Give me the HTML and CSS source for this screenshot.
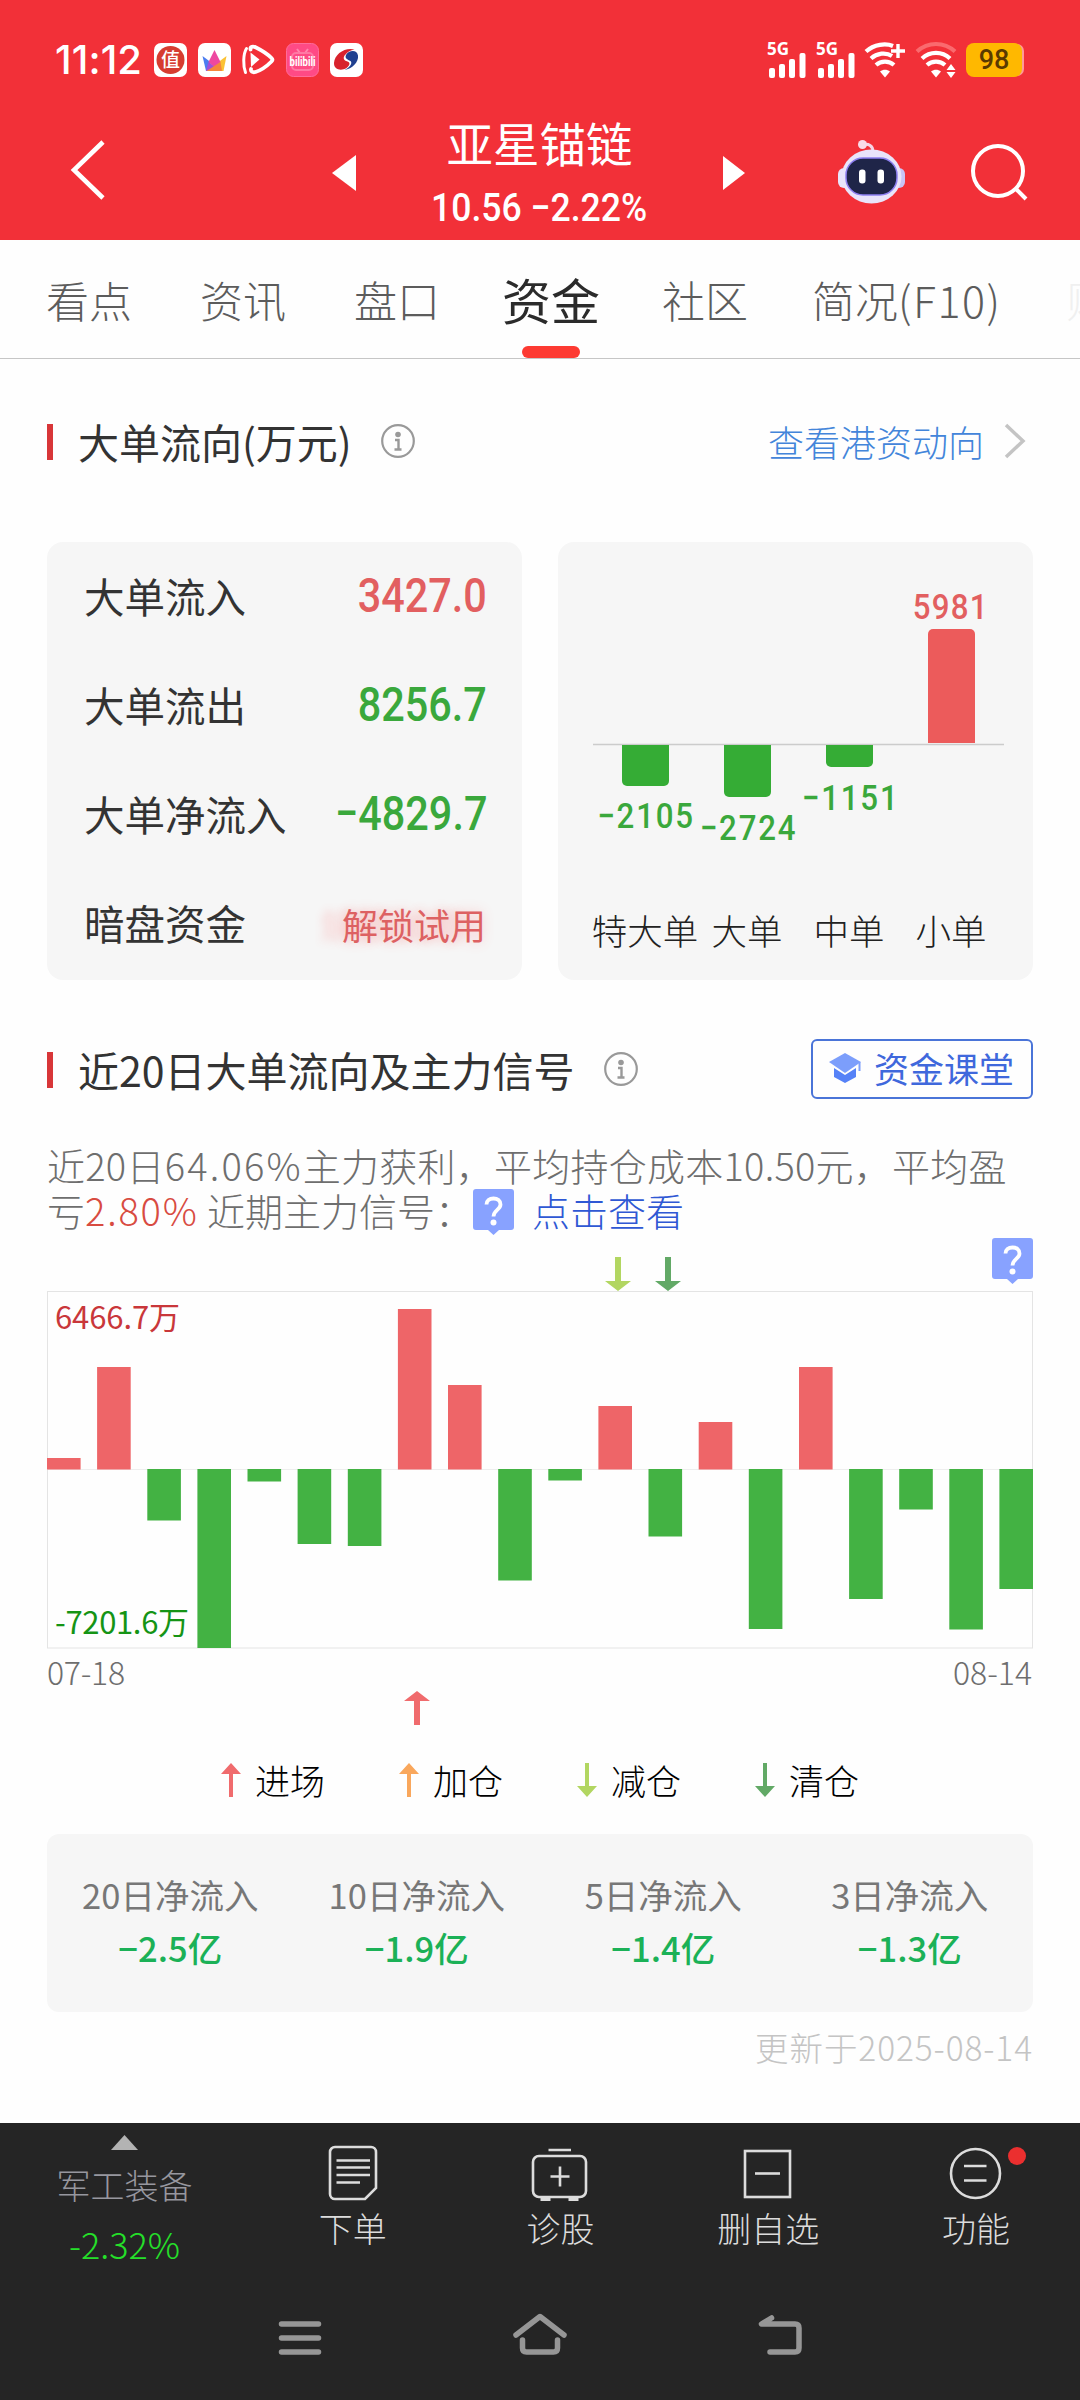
FILE: index.html
```html
<!DOCTYPE html>
<html lang="zh-CN">
<head>
  <meta charset="UTF-8" />
  <meta name="viewport" content="width=device-width, initial-scale=1.0" />
  <title>亚星锚链 - 资金</title>
  <link rel="stylesheet" href="styles.css">
</head>
<body>

  <svg width="0" height="0" class="defs">
    <symbol id="arrow-up" viewBox="0 0 26 34"><path d="M13 0 26 10H16V34H10V10H0z"/></symbol>
    <symbol id="arrow-down" viewBox="0 0 26 34"><path d="M13 34 0 24H10V0H16V24H26z"/></symbol>
    <symbol id="arrow-up-s" viewBox="0 0 20 34"><path d="M10 0 20 11H12V34H8V11H0z"/></symbol>
    <symbol id="arrow-down-s" viewBox="0 0 20 34"><path d="M10 34 0 23H8V0H12V23H20z"/></symbol>
    <symbol id="info" viewBox="0 0 34 34">
      <circle cx="17" cy="17" r="15.8" fill="none" stroke="#999" stroke-width="2.2"/>
      <circle cx="17" cy="10.5" r="2.8" fill="#999"/>
      <path d="M14 16h3.5v9M13.5 25.5h7" fill="none" stroke="#999" stroke-width="2.4"/>
    </symbol>
    <symbol id="help" viewBox="0 0 41 46">
      <path d="M3 0H38a3 3 0 0 1 3 3V38a3 3 0 0 1-3 3H26L20.500 46 15 41H3a3 3 0 0 1-3-3V3a3 3 0 0 1 3-3z" fill="#88a2ff"/>
      <path d="M13.500 15.500c0-4 3-6 7-6s7 2.200 7 6c0 5.300-7 5.600-7 12" fill="none" stroke="#fff" stroke-width="3.800"/>
      <circle cx="20.500" cy="33.500" r="3" fill="#fff"/>
    </symbol>
    <symbol id="signal" viewBox="0 0 39 36">
      <rect x="2" y="26" width="6" height="10" rx="2"/>
      <rect x="12" y="22" width="6" height="14" rx="2"/>
      <rect x="22" y="17" width="6" height="19" rx="2"/>
      <rect x="32.500" y="11" width="6" height="25" rx="2"/>
    </symbol>
  </svg>

  <header>
    <div class="status">
      <span class="time">11:12</span>
      <div class="apps">
        <svg viewBox="0 0 33 34"><rect width="33" height="34" rx="7" fill="#fff"/><circle cx="16.500" cy="17" r="14" fill="#d63c30"/><text x="16.500" y="24" font-size="19" font-weight="500" text-anchor="middle" fill="#fff">值</text></svg>
        <svg viewBox="0 0 33 34"><rect width="33" height="34" rx="7" fill="#fff"/><path d="M4.500 13l8 6-1 9H8z" fill="#4b7df0"/><path d="M28.500 13l-8 6 1 9h4z" fill="#fbc233"/><path d="M16.500 7l6 12-6 6-6-6z" fill="#ee48a0"/><path d="M10.500 19l6 5-4 4H8z" fill="#a050d8"/><path d="M22.500 19l-14 9H24z" fill="#f6863c"/></svg>
        <svg viewBox="0 0 33 34"><path d="M4.500 5.500C1 11 1 23 3.500 29.500" fill="none" stroke="#fff" stroke-width="3" stroke-linecap="round"/><path d="M8.500 6.500C8 3.500 11 3 14 4.500 20 7.500 26 11.500 29.500 15c1 1 1 2.500 0 3.500C25 23 20 27 13.500 29c-3 .8-5-.5-4.500-3" fill="none" stroke="#fff" stroke-width="3.800" stroke-linecap="round"/><path d="M8.500 9.500 17.500 16.500 9 24z" fill="#fff"/></svg>
        <svg viewBox="0 0 33 34"><rect x=".5" y=".5" width="32" height="33" rx="7" fill="#ff4a85" stroke="#ff6b9a"/><path d="M11 6l3 4M22 6l-3 4" stroke="#ff86ad" stroke-width="2"/><rect x="6" y="10" width="21" height="17" rx="4" fill="none" stroke="#ff78a4" stroke-width="2"/><text class="bili" x="16.500" y="23" font-size="13" font-weight="700" text-anchor="middle" textLength="26" lengthAdjust="spacingAndGlyphs" fill="#fff">bilibili</text></svg>
        <svg viewBox="0 0 33 34"><rect width="33" height="34" rx="7" fill="#fff"/><path d="M24.500 6.500C15 4 4.500 11 4 20c-.3 6.500 7 8.500 12.500 5 3.500-2.500 4-5.500 1-6.500-4-1-5-4-2-7 2-2.500 5-4.500 9-5z" fill="#d8222c"/><path d="M16 12c2.500-5 11-6 12 .5 1 6.500-6 13.500-13.500 14.500 5-2 8.500-7 6-9-3-1.500-6-2.500-4.500-6z" fill="#20408f"/></svg>
      </div>
      <div class="sysicons">
        <svg class="sig" viewBox="0 0 39 36" fill="#fff"><text class="fiveg" x="0" y="12.500">5G</text><use href="#signal"/></svg>
        <svg class="sig" viewBox="0 0 39 36" fill="#fff"><text class="fiveg" x="0" y="12.500">5G</text><use href="#signal"/></svg>
        <svg class="wifi" viewBox="0 0 40 36"><g fill="none" stroke="#fff" stroke-width="4.200"><path d="M1 9.500C9 2 21 1 28 4"/><path d="M6 16.500C12 11 21 10 27 14"/><path d="M11 23c5-4.500 13-4.500 18 0"/><path d="M33 2v14M26 9h14" stroke-width="3.400"/></g><path d="M15 29.500c3-2.500 7-2.500 10 0L20 35.500z" fill="#fff"/></svg>
        <svg class="wifi" viewBox="0 0 40 36"><g fill="none" stroke="#fff" stroke-width="4.200"><path d="M1 9.500C12-.5 28-.5 39 9.500" stroke="#fa6a6e"/><path d="M6 16.500c8-7.500 20-7.500 28 0"/><path d="M11 23c5-4.500 13-4.500 18 0"/></g><path d="M15 29.500c3-2.500 7-2.500 10 0L20 35.500z" fill="#fff"/><path d="M35 22l4.500 6h-9zM35 36l4.500-6h-9z" fill="#fff"/></svg>
        <div class="battery">98</div>
      </div>
    </div>

    <div class="titlebar">
      <svg class="back" viewBox="0 0 34 60"><path d="M32 2 3 30 32 58" fill="none" stroke="#fff" stroke-width="4.600"/></svg>
      <svg class="prev" viewBox="0 0 24 36"><path d="M24 0V36L0 18z" fill="#fff"/></svg>
      <div class="stock">
        <h1>亚星锚链</h1>
        <p class="din"><span>10.56 −2.22%</span></p>
      </div>
      <svg class="next" viewBox="0 0 22 34"><path d="M0 0V34L22 17z" fill="#fff"/></svg>
      <svg class="robot" viewBox="0 0 67 64">
        <path d="M24 5c7-2 11 1 11 7" fill="none" stroke="#f6d5e6" stroke-width="3"/>
        <circle cx="24.500" cy="4.500" r="4.500" fill="#f9dbe8"/>
        <rect x="0" y="28" width="12" height="20" rx="6" fill="#e8e4fb"/>
        <rect x="55" y="28" width="12" height="20" rx="6" fill="#c9c4f6"/>
        <ellipse cx="33.500" cy="36.500" rx="30" ry="27" fill="#e9e4fa"/>
        <rect x="8" y="18" width="51" height="37" rx="17" fill="#1f2548" stroke="#8d7ff0" stroke-width="1.500"/>
        <rect x="21" y="29.500" width="6.500" height="14" rx="3" fill="#fff"/>
        <rect x="39.500" y="29.500" width="6.500" height="14" rx="3" fill="#fff"/>
      </svg>
      <svg class="search" viewBox="0 0 57 56"><circle cx="27" cy="27" r="25" fill="none" stroke="#fff" stroke-width="4"/><path d="M45 45l10 10" stroke="#fff" stroke-width="4"/></svg>
    </div>
  </header>

  <nav class="tabs">
    <a>看点</a>
    <a>资讯</a>
    <a>盘口</a>
    <a class="active">资金</a>
    <a>社区</a>
    <a class="profile">简况<span class="latin">(F10)</span></a>
    <a class="faded">财务</a>
  </nav>

  <section class="flow">
    <div class="heading">
      <h2>大单流向(万元)</h2>
      <svg class="info"><use href="#info"/></svg>
      <a class="more">查看港资动向 <svg viewBox="0 0 22 36"><path d="M2 2 19 18 2 34" fill="none" stroke="#c4c4c4" stroke-width="3.500"/></svg></a>
    </div>

    <div class="cards">
      <div class="card figures">
        <div class="row"><span>大单流入</span><b class="din red"><span>3427.0</span></b></div>
        <div class="row"><span>大单流出</span><b class="din green"><span>8256.7</span></b></div>
        <div class="row"><span>大单净流入</span><b class="din green"><span>−4829.7</span></b></div>
        <div class="row"><span>暗盘资金</span><span class="unlock">解锁试用</span></div>
      </div>
      <div class="card">
        <svg class="orders" viewBox="0 0 475 438">
          <path d="M35 202.500H446" stroke="#ccc" stroke-width="1.500"/>
          <g fill="#35ac35">
            <path d="M64 203H111V239a5 5 0 0 1-5 5H69a5 5 0 0 1-5-5z"/>
            <path d="M166 203H213V250a5 5 0 0 1-5 5H171a5 5 0 0 1-5-5z"/>
            <path d="M268 203H315V220a5 5 0 0 1-5 5H273a5 5 0 0 1-5-5z"/>
          </g>
          <path d="M370 201V92a5 5 0 0 1 5-5H412a5 5 0 0 1 5 5V201z" fill="#ec5b5b"/>
          <!-- digits squeezed to 88%, x is in squeezed units -->
          <g class="vals green" transform="scale(.88 1)">
            <text x="44.500" y="286" textLength="109">−2105</text>
            <text x="161" y="298" textLength="109">−2724</text>
            <text x="277" y="268" textLength="109">−1151</text>
            <text class="red" x="403" y="77" textLength="85">5981</text>
          </g>
          <g class="cats">
            <text x="87">特大单</text>
            <text x="189">大单</text>
            <text x="291">中单</text>
            <text x="393">小单</text>
          </g>
        </svg>
      </div>
    </div>
  </section>

  <section class="signal">
    <div class="heading">
      <h2>近20日大单流向及主力信号</h2>
      <svg class="info"><use href="#info"/></svg>
      <a class="course">
        <svg viewBox="0 0 32 30"><path d="M16 0 32 9 16 20 0 9z" fill="#7c9efb"/><path d="M5 15l11 7 11-7v9l-11 6-11-6z" fill="#5682f7"/><path d="M30.500 9v9" stroke="#7c9efb" stroke-width="2"/></svg>
        资金课堂
      </a>
    </div>

    <div class="summary">
      <p>近20日<span class="wide">64.06%</span>主力获利，平均持仓成本10.50元，平均盈</p>
      <p>亏<em class="wide">2.80%</em> 近期主力信号：<svg class="help"><use href="#help"/></svg><a>点击查看</a></p>
    </div>

    <!-- 近20日大单净流入 -->
    <svg class="chart" viewBox="0 0 986 490">
      <use href="#arrow-down" x="558" y="19" width="26" height="34" fill="#b2d661"/>
      <use href="#arrow-down" x="608" y="19" width="26" height="34" fill="#62a966"/>
      <use href="#help" x="945" y="0" width="41" height="46"/>
      <rect x=".5" y="53.500" width="985" height="356.500" fill="none" stroke="#e4e4e4"/>
      <path d="M0 231.500H986" stroke="#eee"/>
      <g fill="#ee6568">
        <rect x="0" y="220" width="33.600" height="11.500"/>
        <rect x="50.100" y="129" width="33.600" height="102.500"/>
        <rect x="350.900" y="71" width="33.600" height="160.500"/>
        <rect x="401" y="147" width="33.600" height="84.500"/>
        <rect x="551.400" y="168" width="33.600" height="63.500"/>
        <rect x="651.700" y="184" width="33.600" height="47.500"/>
        <rect x="752" y="129" width="33.600" height="102.500"/>
      </g>
      <g fill="#43b243">
        <rect x="100.300" y="231" width="33.600" height="51.500"/>
        <rect x="150.400" y="231" width="33.600" height="179"/>
        <rect x="200.500" y="231" width="33.600" height="12.500"/>
        <rect x="250.600" y="231" width="33.600" height="75"/>
        <rect x="300.800" y="231" width="33.600" height="77"/>
        <rect x="451.200" y="231" width="33.600" height="111.500"/>
        <rect x="501.300" y="231" width="33.600" height="11.500"/>
        <rect x="601.500" y="231" width="33.600" height="67.500"/>
        <rect x="701.800" y="231" width="33.600" height="160"/>
        <rect x="802.100" y="231" width="33.600" height="130"/>
        <rect x="852.200" y="231" width="33.600" height="40.500"/>
        <rect x="902.300" y="231" width="33.600" height="160.500"/>
        <rect x="952.400" y="231" width="33.600" height="120"/>
      </g>
      <g class="scale">
        <text x="8" y="91" textLength="125" fill="#c9373a">6466.7万</text>
        <text x="8" y="396" textLength="134" fill="#159415">-7201.6万</text>
        <text class="date" x="0" y="447" textLength="78">07-18</text>
        <text class="date" x="906" y="447" textLength="79">08-14</text>
      </g>
      <use href="#arrow-up" x="357" y="453" width="26" height="34" fill="#f06b6d"/>
    </svg>

    <div class="legend">
      <span><svg fill="#f06b6d"><use href="#arrow-up-s"/></svg>进场</span>
      <span><svg fill="#f9a75c"><use href="#arrow-up-s"/></svg>加仓</span>
      <span><svg fill="#b2d661"><use href="#arrow-down-s"/></svg>减仓</span>
      <span><svg fill="#62a966"><use href="#arrow-down-s"/></svg>清仓</span>
    </div>

    <div class="card totals">
      <div><span>20日净流入</span><b>−2.5亿</b></div>
      <div><span>10日净流入</span><b>−1.9亿</b></div>
      <div><span>5日净流入</span><b>−1.4亿</b></div>
      <div><span>3日净流入</span><b>−1.3亿</b></div>
    </div>
    <p class="updated">更新于2025-08-14</p>
  </section>

  <footer>
    <div class="toolbar">
      <div class="sector">
        <svg viewBox="0 0 27 15"><path d="M13.500 0 27 15H0z" fill="#b3b3b3"/></svg>
        <span>军工装备</span>
        <em>-2.32%</em>
      </div>
      <div class="tool">
        <svg viewBox="0 0 56 56"><path d="M10 2H46a5 5 0 0 1 5 5V43L40 54H10a5 5 0 0 1-5-5V7a5 5 0 0 1 5-5z"/><path d="M11.500 15.500H45M11.500 22.500H45M11.500 30H45M11.500 37.500H35"/></svg>
        <span>下单</span>
      </div>
      <div class="tool">
        <svg viewBox="0 0 56 56"><rect x="0" y="11" width="53" height="41" rx="6"/><path d="M15.500 5H38M17.500 31.500H36.500M27 21.500V41.500"/><path d="M7.500 54H17.500M35.500 54H45.500" stroke-width="4"/></svg>
        <span>诊股</span>
      </div>
      <div class="tool">
        <svg viewBox="0 0 56 56"><rect x="5" y="6" width="45" height="46"/><path d="M15 28.500H40"/></svg>
        <span>删自选</span>
      </div>
      <div class="tool">
        <svg viewBox="0 0 56 56"><circle cx="27.500" cy="28.500" r="24.500"/><path d="M16 21H38.500M16 35.500H38.500"/></svg>
        <span>功能</span>
        <i class="dot"></i>
      </div>
    </div>
    <div class="sysnav">
      <svg viewBox="0 0 54 42"><path d="M8.500 10H45.500M8.500 24H45.500M8.500 38H45.500"/></svg>
      <svg viewBox="0 0 54 42"><path d="M3 21 27 2.500 51 21M9.500 26v8q0 4 4 4h27q4 0 4-4v-8"/></svg>
      <svg viewBox="0 0 54 42"><path d="M18.500 4 8.500 10H42q4 0 4 4V34q0 4-4 4H17"/></svg>
    </div>
  </footer>

</body>
</html>
```
FILE: styles.css
```css
* { margin: 0; padding: 0; box-sizing: border-box; }
body { width: 1080px; height: 2400px; display: flex; flex-direction: column; background: #fefefe; color: #333; font-family: "Noto Sans CJK SC", sans-serif; font-weight: 300; overflow: hidden; }
svg { display: block; flex: none; overflow: visible; }
h1, h2 { font-weight: inherit; }
em, i { font-style: normal; }
.defs { position: absolute; }
.red { color: #e25f60; fill: #e25f60; }
.green { color: #3aa83c; fill: #3aa83c; }

/* narrow digits */
.din { font-family: Roboto, sans-serif; font-weight: 500; }
.din span { display: inline-block; transform: scaleX(.845); transform-origin: right; }

header { height: 240px; background: #f23038; color: #fff; }
.status { height: 120px; display: flex; align-items: center; padding: 0 55px 0 55px; }
.time { width: 99px; font: 500 40px/50px Inter, sans-serif; letter-spacing: .1px; white-space: nowrap; }
.apps { display: flex; gap: 11px; }
.apps svg { width: 33px; height: 34px; }
.bili { font-family: Roboto, sans-serif; }
.sysicons { margin-left: auto; display: flex; align-items: center; gap: 10px; }
.sig { width: 39px; height: 36px; }
.fiveg { font: 700 17px "Open Sans", sans-serif; }
.wifi { width: 40px; height: 36px; }
.wifi + .wifi { margin-left: 1px; }
.battery { width: 56px; height: 34px; margin-right: 3px; border-radius: 8px; background: #ffb800; color: #5a3a00; font: 500 27px/35px Roboto, sans-serif; text-align: center; box-shadow: 3px 0 0 -1px #f99; }

.titlebar { height: 120px; display: flex; align-items: flex-start; padding-left: 71px; }
.back { width: 34px; height: 60px; margin-top: 20px; }
.prev { width: 24px; height: 36px; margin: 35px 0 0 227px; }
.stock { width: 367px; text-align: center; }
.stock h1 { margin-top: -3px; font-size: 46.500px; line-height: 50px; font-weight: 400; }
.stock p { font-size: 39.500px; line-height: 60px; white-space: nowrap; margin-top: 11px; }
.stock .din span { transform: scaleX(.9); transform-origin: center; }
.next { width: 22px; height: 34px; margin-top: 36px; }
.robot { width: 67px; height: 64px; margin: 20px 0 0 93px; }
.search { width: 57px; height: 56px; margin: 24px 0 0 66px; }

.tabs { position: relative; height: 119px; display: flex; align-items: center; padding-left: 46px; border-bottom: 1px solid #c6c6c6; overflow: hidden; white-space: nowrap; }
.tabs a { flex: none; margin-right: 68px; font-size: 43px; line-height: 118px; color: #5c5c5c; }
.tabs .active { position: relative; margin: 0 62px 0 -6px; font-size: 49px; font-weight: 400; color: #2b2b2b; }
.tabs .active::after { content: ""; position: absolute; left: 20px; bottom: 0; width: 58px; height: 12px; border-radius: 6px; background: #fd3a32; }
.tabs .profile { margin-left: -4px; margin-right: 65px; }
.latin { letter-spacing: 1.500px; }
.tabs .faded { color: #f0f0f0; }

section { padding: 0 47px; }
.heading { display: flex; align-items: center; height: 60px; }
.heading h2 { position: relative; padding-left: 31px; font-size: 41px; line-height: 58px; margin-top: -1px; font-weight: 400; }
.heading h2::before { content: ""; position: absolute; left: 0; top: 12px; width: 6px; height: 36px; background: #d83638; }
.info { width: 34px; height: 34px; margin-left: 29px; }
.more { margin-left: auto; margin-right: 7px; display: flex; align-items: center; gap: 20px; font-size: 36px; color: #4385da; }
.more svg { width: 22px; height: 36px; }

.flow { padding-top: 52px; }
.cards { display: flex; justify-content: space-between; margin-top: 71px; }
.card { width: 475px; height: 438px; border-radius: 16px; background: #f6f6f6; }
.figures { padding: 1px 35px 0 37px; }
.row { height: 109px; padding-bottom: 5px; display: flex; justify-content: space-between; align-items: center; font-size: 40.500px; font-weight: 400; }
.row .din { font-size: 49px; font-weight: 500; }
.row .unlock { margin: 3px 1px 0 0; font-size: 36px; color: #dd6162; text-shadow: -22px 0 8px rgba(255,90,90,.2), 0 0 12px rgba(255,90,90,.3); }
.orders { width: 475px; height: 438px; }
.vals { font: 500 35.500px Roboto, sans-serif; }
.cats { font-size: 35.500px; text-anchor: middle; fill: #222; }
.cats text { transform: translateY(403px); }

.signal { padding-top: 59px; }
.course { width: 222px; height: 60px; margin-left: auto; padding-left: 16px; display: flex; align-items: center; gap: 13px; border: 2px solid #4a74d8; border-radius: 6px; font-size: 35px; line-height: 52px; padding-bottom: 3px; font-weight: 400; color: #3f68dc; white-space: nowrap; }
.course svg { width: 32px; height: 30px; }

.summary { margin-top: 43px; font-size: 38px; line-height: 44px; color: #6e6e6e; white-space: nowrap; }
.summary p { display: flex; align-items: center; height: 45px; white-space: pre; }
.summary .wide { letter-spacing: 2.200px; }
.summary em { color: #d84b41; }
.summary em.wide { letter-spacing: 1.800px; }
.summary p:first-child { letter-spacing: .25px; }
.summary a { margin-left: 18px; color: #2f58d4; }
.help { width: 41px; height: 46px; }
.summary .help { margin-top: 4px; }

.chart { width: 986px; height: 490px; margin-top: 6px; }
.scale { font-size: 31px; font-weight: 400; }
.date { font-size: 32px; font-weight: 300; fill: #6e6e6e; }
.legend { display: flex; gap: 74px; margin: 34px 0 0 174px; height: 36px; }
.legend span { display: flex; align-items: center; gap: 14px; font-size: 35px; line-height: 36px; color: #000; }
.legend svg { width: 20px; height: 34px; }
.totals { width: 986px; height: 178px; margin-top: 36px; display: flex; border-radius: 12px; }
.totals div { flex: 1; padding-top: 34px; display: flex; flex-direction: column; align-items: center; font-size: 34.500px; line-height: 53px; color: #777; font-weight: 400; }
.totals b { font-weight: 500; color: #1bb157; }
.updated { text-align: right; font-size: 33.500px; letter-spacing: .9px; line-height: 70px; color: #c4c4c4; }

footer { margin-top: auto; height: 277px; background: #252525; }
.toolbar { display: flex; height: 170px; color: #dcdcdc; font-size: 34px; line-height: 50px; text-align: center; }
.sector { width: 249px; display: flex; flex-direction: column; align-items: center; padding-top: 12px; color: #97979f; }
.sector svg { width: 27px; height: 15px; margin-bottom: 10px; }
.sector em { margin-top: 8px; font-size: 36px; color: #25e02a; }
.tool { position: relative; width: 207.700px; display: flex; flex-direction: column; align-items: center; padding-top: 22px; }
.tool svg { width: 56px; height: 56px; margin-bottom: 2px; fill: none; stroke: #dcdcdc; stroke-width: 2.600; }
.dot { position: absolute; left: 136px; top: 24px; width: 18px; height: 18px; border-radius: 50%; background: #eb2f2f; }
.sysnav { display: flex; justify-content: center; gap: 186px; padding-top: 21px; }
.sysnav svg { width: 54px; height: 42px; fill: none; stroke: #969696; stroke-width: 5.500; stroke-linecap: round; stroke-linejoin: round; }
```
